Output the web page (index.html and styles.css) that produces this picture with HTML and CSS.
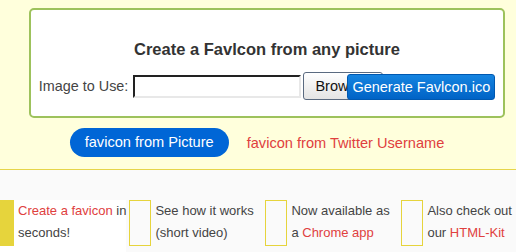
FILE: index.html
```html
<!DOCTYPE html>
<html lang="en">
<head>
  <meta charset="UTF-8" />
  <title>Favicon Generator</title>
  <link rel="stylesheet" href="styles.css">
</head>
<body>
  <div class="top">
    <!-- Upload form -->
    <div class="panel">
      <h2>Create a Favlcon from any picture</h2>
      <div class="upload-row">
        <label for="picture">Image to Use:</label>
        <input type="text" id="picture" />
        <button class="browse">Browse...</button>
        <button class="generate">Generate Favlcon.ico</button>
      </div>
    </div>

    <!-- Source tabs -->
    <div class="tabs">
      <a class="tab active">favicon from Picture</a>
      <a class="tab">favicon from Twitter Username</a>
    </div>
  </div>

  <div class="features">
    <div class="feature current">
      <div class="marker"></div>
      <p><a>Create a favicon</a> in<br>seconds!</p>
    </div>
    <div class="feature">
      <div class="marker"></div>
      <p>See how it works<br>(short video)</p>
    </div>
    <div class="feature">
      <div class="marker"></div>
      <p>Now available as<br>a <a>Chrome app</a></p>
    </div>
    <div class="feature">
      <div class="marker"></div>
      <p>Also check out<br>our <a>HTML-Kit</a></p>
    </div>
  </div>
</body>
</html>
```

FILE: styles.css
```css
body {
  margin: 0;
  font-family: "Liberation Sans", Arial, sans-serif;
  background: #fafafa;
  color: #333;
  overflow: hidden;
}
.top {
  background: #ffffdc;
  border-bottom: 1px solid #e6d54a;
  padding-top: 8px;
  height: 161px;
}
.panel {
  box-sizing: border-box;
  width: 476px;
  height: 110px;
  margin-left: 29px;
  background: white;
  border: 2px solid #9dc25c;
  border-radius: 5px;
  padding-top: 29px;
}
.panel h2 {
  margin: 0;
  font-size: 16.5px;
  line-height: 20px;
  text-align: center;
  color: #333;
}
.upload-row {
  display: flex;
  align-items: center;
  justify-content: center;
  margin-top: 13px;
  font-size: 14.4px;
  color: #444;
}
.upload-row label {
  margin-right: 5px;
}
.upload-row input {
  box-sizing: border-box;
  width: 168px;
  height: 23px;
  border: 2px inset #e8e8e8;
  border-top-color: #777;
  border-left-color: #777;
  background: white;
}
.browse {
  box-sizing: border-box;
  width: 80px;
  height: 28px;
  margin-left: 2px;
  font-family: "Liberation Sans", Arial, sans-serif;
  font-size: 14.5px;
  text-align: left;
  padding-left: 11px;
  color: #111;
  background: linear-gradient(#ffffff, #e4e4e4);
  border: 1px solid #5a6a80;
  border-radius: 3px;
}
.generate {
  box-sizing: border-box;
  height: 26px;
  margin-left: -36px;
  margin-top: 2px;
  padding: 0 4px;
  font-family: "Liberation Sans", Arial, sans-serif;
  font-size: 14.5px;
  color: white;
  background: linear-gradient(#1684e0, #0063c6);
  border: 1px solid #0058b0;
  border-radius: 3px;
}
.tabs {
  display: flex;
  align-items: center;
  justify-content: center;
  gap: 18px;
  margin-top: 10px;
  margin-left: -2px;
  font-size: 14.6px;
}
.tab {
  color: #e0403e;
}
.tab.active {
  background: #0066d6;
  color: white;
  padding: 0 15px;
  height: 29px;
  line-height: 29px;
  border-radius: 15px;
}
.features {
  display: flex;
  margin-top: 30px;
  margin-left: -8px;
  gap: 3px;
  font-size: 13px;
  color: #444;
}
.feature {
  display: flex;
  flex: 0 0 133px;
  gap: 4px;
  height: 60px;
}
.feature.current {
  background: white;
}
.marker {
  box-sizing: border-box;
  flex: 0 0 22px;
  height: 46px;
  border: 1px solid #e6d43c;
}
.current .marker {
  background: #e6d43c;
}
.feature p {
  flex: 0 0 107px;
  margin: 0;
  line-height: 22px;
  white-space: nowrap;
}
.feature a {
  color: #e0403e;
}
```
